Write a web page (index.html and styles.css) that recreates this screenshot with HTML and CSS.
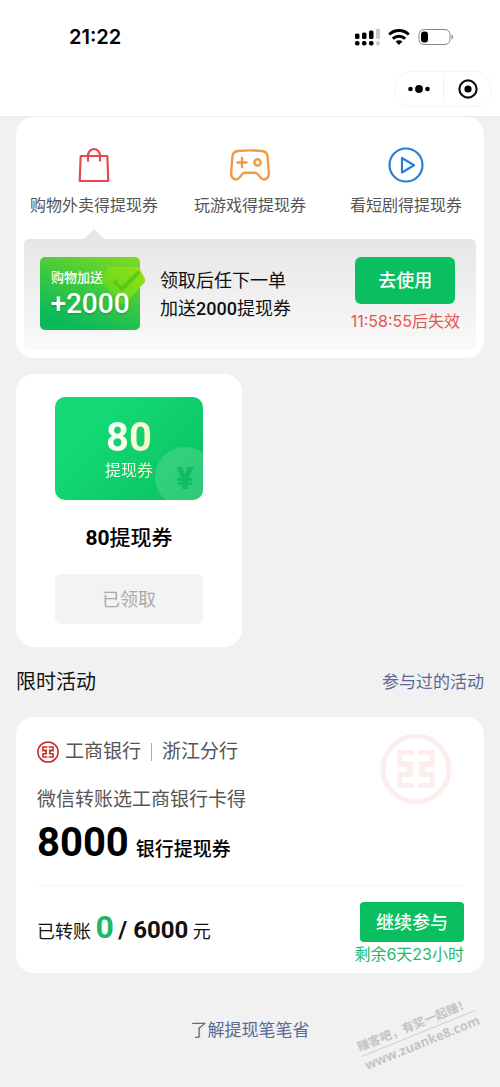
FILE: index.html
```html
<!DOCTYPE html>
<html lang="zh-CN">
<head>
    <meta charset="UTF-8">
    <meta name="viewport" content="width=device-width, initial-scale=1.0">
    <title>提现笔笔省</title>
    <link rel="stylesheet" href="styles.css">
</head>
<body>
    <header class="header">
        <div class="status-bar">
            <span class="time">21:22</span>
            <div class="status-icons">
                <svg width="26" height="18" viewBox="0 0 26 18">
                    <g fill="#000">
                        <rect x="1" y="5.500" width="4.500" height="5.500" rx="1.500"/>
                        <rect x="8" y="4.500" width="4.500" height="6.500" rx="1.500"/>
                        <rect x="15" y="2.500" width="4.500" height="8.500" rx="1.500"/>
                        <rect x="1" y="13" width="4.500" height="4.500" rx="1.800"/>
                        <rect x="8" y="13" width="4.500" height="4.500" rx="1.800"/>
                        <rect x="15" y="13" width="4.500" height="4.500" rx="1.800"/>
                    </g>
                    <g fill="#ccc">
                        <rect x="22" y="0.500" width="4" height="10.500" rx="1.500"/>
                        <rect x="22" y="13" width="4" height="4.500" rx="1.800"/>
                    </g>
                </svg>
                <svg width="22" height="18" viewBox="0 0 22 18">
                    <g fill="none" stroke="#000" stroke-width="3">
                        <path d="M1.200 6.500a14 14 0 0 1 19.600 0"/>
                        <path d="M4.800 10.700a8.800 8.800 0 0 1 12.400 0"/>
                    </g>
                    <path d="M11 17l-3.400-3.500a4.900 4.900 0 0 1 6.800 0z"/>
                </svg>
                <svg width="36" height="18" viewBox="0 0 36 18">
                    <rect x="1" y="1.500" width="31" height="15" rx="5" fill="none" stroke="#888"/>
                    <rect x="3" y="3.500" width="7" height="11" rx="3"/>
                    <path d="M33.500 6.500v5c2-.6 2-4.400 0-5z" fill="#888"/>
                </svg>
            </div>
        </div>
        <div class="nav-bar">
            <div class="capsule">
                <button type="button" aria-label="更多">
                    <svg width="22" height="20" viewBox="0 0 22 20"><circle cx="2.500" cy="10" r="2.300"/><circle cx="11" cy="10" r="3.900"/><circle cx="19.500" cy="10" r="2.300"/></svg>
                </button>
                <button type="button" aria-label="关闭">
                    <svg width="20" height="20" viewBox="0 0 20 20"><circle cx="10" cy="10" r="8.600" fill="none" stroke="#111" stroke-width="2.200"/><circle cx="10" cy="10" r="3.600"/></svg>
                </button>
            </div>
        </div>
    </header>

    <main class="content">
        <section class="card tasks">
            <nav class="tabs">
                <a class="tab active" href="#">
                    <svg width="36" height="36" viewBox="0 0 36 36" fill="none" stroke="#e5484d" stroke-width="2.200" stroke-linejoin="round">
                        <path d="M4.700 9h26.600l1 25h-28.600z"/>
                        <path d="M12 14.500V8.500a6 6.500 0 0 1 12 0v6"/>
                    </svg>
                    <span>购物外卖得提现券</span>
                </a>
                <a class="tab" href="#">
                    <svg width="42" height="36" viewBox="0 0 42 36" fill="none" stroke="#f09a45" stroke-width="2.400" stroke-linecap="round" stroke-linejoin="round">
                        <path d="M9 4Q21 2.800 33 4Q38 4.500 38.500 9L39.900 26C40.200 32 35 34 32 31L28.500 27Q27.500 25.800 26 25.800H16Q14.500 25.800 13.500 27L10 31C7 34 1.800 32 2.100 26L3.500 9Q4 4.500 9 4z"/>
                        <path d="M13 11v9M8.500 15.500h9"/>
                        <circle cx="28.500" cy="15.500" r="3.200"/>
                    </svg>
                    <span>玩游戏得提现券</span>
                </a>
                <a class="tab" href="#">
                    <svg width="36" height="36" viewBox="0 0 36 36" fill="none" stroke="#2680d9" stroke-width="2.200" stroke-linejoin="round">
                        <circle cx="18" cy="18" r="16.500"/>
                        <path d="M14 11v14.500l12-7.250z"/>
                    </svg>
                    <span>看短剧得提现券</span>
                </a>
            </nav>
            <div class="offer">
                <div class="gift">
                    <svg class="gift-mark" width="46" height="42" viewBox="0 0 46 42">
                        <defs>
                            <linearGradient id="mark" x1="0" y1="1" x2="1" y2="0">
                                <stop offset="0" stop-color="#5bd326" stop-opacity="0.3"/>
                                <stop offset="0.400" stop-color="#6fda1c"/>
                                <stop offset="1" stop-color="#98e214"/>
                            </linearGradient>
                        </defs>
                        <path d="M10 3h26q3 0 4 2l5 10q1 2-1 4L27 38q-4 4-7 1L3 20q-2-2-1-4L6 5q1-2 4-2z" fill="url(#mark)"/>
                        <path d="M14 17l8 8L39 8" fill="none" stroke="#5cc81a" stroke-width="4"/>
                    </svg>
                    <span class="gift-label">购物加送</span>
                    <span class="gift-num">+2000</span>
                </div>
                <p class="offer-text">领取后任下一单<br>加送<b>2000</b>提现券</p>
                <div class="offer-action">
                    <button class="btn btn-use" type="button">去使用</button>
                    <span class="countdown">11:58:55后失效</span>
                </div>
            </div>
        </section>

        <section class="card coupon-card">
            <div class="coupon">
                <span class="coupon-num">80</span>
                <span class="coupon-label">提现券</span>
                <span class="coin">¥</span>
            </div>
            <h3><b>80</b>提现券</h3>
            <button class="btn btn-done" type="button" disabled>已领取</button>
        </section>

        <div class="section-head">
            <h2>限时活动</h2>
            <a href="#">参与过的活动</a>
        </div>

        <section class="card activity">
            <svg class="bank-mark" width="72" height="72" viewBox="0 0 72 72">
                <use href="#icbc"/>
            </svg>
            <div class="bank">
                <svg width="22" height="22" viewBox="0 0 72 72">
                    <g id="icbc">
                        <circle cx="36" cy="36" r="33" fill="none" stroke="currentColor" stroke-width="5"/>
                        <path d="M34 17H17v17h10v5H17v16h17v-5H22v-6h11V28H22v-6h12zM38 17h17v17H45v5h10v16H38v-5h12v-6H39V28h11v-6H38z" fill="currentColor"/>
                    </g>
                </svg>
                <span>工商银行</span>
                <i class="split"></i>
                <span>浙江分行</span>
            </div>
            <p class="desc">微信转账选工商银行卡得</p>
            <p class="reward"><b>8000</b><span>银行提现券</span></p>
            <div class="progress">
                <p class="amount">已转账 <b class="now">0</b> <b>/ 6000</b> 元</p>
                <div class="progress-action">
                    <button class="btn btn-join" type="button">继续参与</button>
                    <span class="remain">剩余6天23小时</span>
                </div>
            </div>
        </section>
    </main>

    <footer class="footer">
        <a href="#">了解提现笔笔省</a>
    </footer>

    <div class="watermark">
        <span>赚客吧，有奖一起赚！</span>
        <span class="site">www.zuanke8.com</span>
    </div>
</body>
</html>
```
FILE: styles.css
```css
* {
    margin: 0;
    padding: 0;
    box-sizing: border-box;
}

body {
    position: relative;
    background: #f1f1f1;
    color: #111;
    font-family: Roboto, "Noto Sans CJK SC", sans-serif;
    font-size: 18px;
    overflow-x: hidden;
}

a {
    color: #576b95;
    font-size: 17px;
    text-decoration: none;
}

svg {
    display: block;
    flex: none;
}

button {
    border: none;
    font-family: inherit;
    cursor: pointer;
}

/* 顶部 */
.header {
    background: #fff;
    border-bottom: 1px solid #ececec;
}

.status-bar {
    display: flex;
    justify-content: space-between;
    align-items: center;
    height: 63px;
    padding: 11px 46px 0 69px;
}

.time {
    font-family: Inter, sans-serif;
    font-size: 20px;
    font-weight: 600;
    color: #000;
}

.status-icons {
    display: flex;
    gap: 8px;
}

.nav-bar {
    display: flex;
    justify-content: flex-end;
    padding: 8px 8px 9px;
}

.capsule {
    display: flex;
    width: 98px;
    height: 36px;
    border: 1px solid #f5f5f5;
    border-radius: 20px;
}

.capsule button {
    display: flex;
    flex: 1;
    justify-content: center;
    align-items: center;
    background: none;
}

.capsule button + button::before {
    content: "";
    width: 1px;
    height: 24px;
    margin-right: 14px;
    background: #f0f0f0;
}

.capsule button + button {
    justify-content: flex-start;
}

/* 卡片 */
.content {
    padding: 0 16px;
}

.card {
    background: #fff;
    border-radius: 18px;
}

.tasks {
    padding: 30px 0 8px;
}

.tabs {
    display: flex;
}

.tab {
    position: relative;
    display: flex;
    flex: 1;
    flex-direction: column;
    align-items: center;
    gap: 11px;
    padding-bottom: 21px;
    color: #555;
    font-size: 16px;
    line-height: 24px;
}

.active::after {
    content: "";
    position: absolute;
    bottom: 0;
    border: 10px solid transparent;
    border-top: none;
    border-bottom-color: #e6e6e6;
}

.offer {
    display: flex;
    align-items: flex-start;
    margin: 0 8px;
    padding: 18px 16px 17px;
    background: linear-gradient(#e6e6e6, #fafafa);
    border-radius: 5px;
}

.gift {
    position: relative;
    display: flex;
    flex-direction: column;
    align-items: center;
    width: 100px;
    height: 73px;
    padding-top: 11px;
    background: linear-gradient(20deg, #0bb95b 15%, #35c743 50%, #82dc20);
    border-radius: 5px;
    color: #fff;
}

.gift-mark {
    position: absolute;
    top: 7px;
    right: -6px;
}

.gift-label,
.gift-num {
    position: relative;
}

.gift-label {
    align-self: flex-start;
    padding-left: 11px;
    font-size: 13px;
    font-weight: 500;
    line-height: 20px;
}

.gift-num {
    font-size: 28px;
    font-weight: 500;
    line-height: 32px;
    text-shadow: 0 1px 2px rgba(0, 100, 40, 0.4);
}

.offer-text {
    flex: 1;
    padding: 10px 0 0 20px;
    line-height: 28px;
}

.offer-text b {
    font-weight: 500;
}

.offer-action,
.progress-action {
    display: flex;
    flex-direction: column;
    align-items: center;
}

.btn {
    padding-bottom: 3px;
    border-radius: 6px;
    background: #0abf5f;
    color: #fff;
    font-size: 18px;
    font-weight: 500;
}

.btn-use {
    width: 100px;
    height: 47px;
}

.countdown,
.remain {
    font-family: Inter, "Noto Sans CJK SC", sans-serif;
    font-size: 16px;
    line-height: 24px;
}

.countdown {
    margin-top: 5px;
    color: #e75550;
}

.coupon-card {
    display: flex;
    flex-direction: column;
    align-items: center;
    width: 226px;
    margin-top: 16px;
    padding: 23px 39px;
}

.coupon {
    position: relative;
    display: flex;
    flex-direction: column;
    align-items: center;
    width: 100%;
    height: 103px;
    padding-top: 20px;
    background: linear-gradient(135deg, #13d873 30%, #0abf5f);
    border-radius: 10px;
    overflow: hidden;
}

.coupon-num,
.coupon-label {
    background: linear-gradient(100deg, #fff 20%, #f5f5b4);
    background-clip: text;
    -webkit-background-clip: text;
    color: transparent;
}

.coupon-num {
    font-size: 40px;
    font-weight: 700;
    line-height: 42px;
}

.coupon-label {
    font-size: 16px;
    line-height: 24px;
}

.coin {
    position: absolute;
    top: 50px;
    right: -12px;
    width: 60px;
    height: 60px;
    border-radius: 50%;
    background: rgba(255, 255, 255, 0.15);
    color: #0dbd60;
    font-size: 32px;
    font-weight: 900;
    line-height: 62px;
    text-align: center;
}

.coupon-card h3 {
    margin: 23px 0 21px;
    color: #000;
    font-size: 21px;
    font-weight: 500;
    line-height: 30px;
}

.btn-done {
    width: 100%;
    height: 50px;
    background: #f3f3f3;
    color: #aaa;
    font-weight: 400;
}

/* 限时活动 */
.section-head {
    display: flex;
    justify-content: space-between;
    align-items: center;
    padding: 20px 0;
    line-height: 30px;
}

.section-head h2 {
    font-size: 20px;
    font-weight: 400;
}

.activity {
    position: relative;
    padding: 21px 20px 7px 21px;
}

.bank-mark {
    position: absolute;
    top: 16px;
    right: 32px;
    color: #fdeeee;
}

.bank {
    display: flex;
    align-items: center;
    gap: 6px;
    color: #555;
    font-size: 19px;
    line-height: 28px;
}

.bank svg {
    color: #cb2b2b;
}

.split {
    width: 1px;
    height: 18px;
    margin: 0 4px;
    background: #aaa;
}

.desc {
    margin-top: 20px;
    color: #555;
    font-size: 19px;
    line-height: 28px;
}

.reward {
    display: flex;
    align-items: baseline;
    gap: 7px;
    padding-top: 5px;
    color: #000;
    font-size: 19px;
    font-weight: 500;
    line-height: 48px;
}

.reward b {
    font-size: 40px;
    font-weight: 700;
}

.progress {
    display: flex;
    justify-content: space-between;
    align-items: flex-start;
    margin-top: 11px;
    padding-top: 16px;
    border-top: 1px solid #f5f5f5;
}

.amount {
    line-height: 50px;
}

.amount b {
    font-size: 24px;
    font-weight: 700;
}

.amount .now {
    color: #1db968;
    font-size: 32px;
}

.progress-action {
    align-items: flex-end;
}

.remain {
    color: #1db968;
}

.btn-join {
    width: 104px;
    height: 40px;
    border-radius: 4px;
}

/* 底部 */
.footer {
    padding: 44px 0;
    line-height: 26px;
    text-align: center;
}

.watermark {
    position: absolute;
    top: 1015px;
    right: 20px;
    color: #c4c4c4;
    font-size: 12px;
    font-weight: 700;
    line-height: 18px;
    transform: rotate(-22deg);
    white-space: nowrap;
}

.watermark span {
    display: block;
}

.watermark .site {
    border-top: 1px solid #d0d0d0;
    font-family: "Open Sans", sans-serif;
    font-size: 13px;
}
```
